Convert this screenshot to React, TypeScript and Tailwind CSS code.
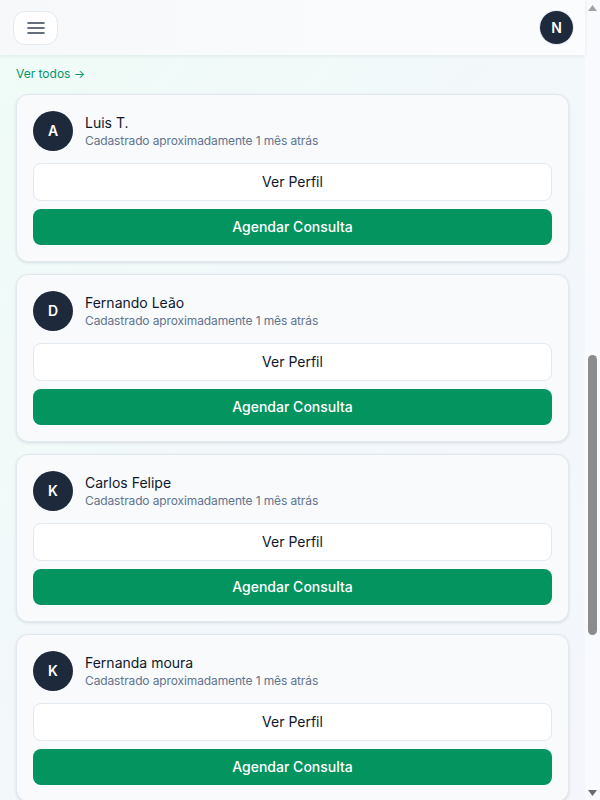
import React from "react";

const patients = [
  { initial: "A", name: "Luis T." },
  { initial: "D", name: "Fernando Leão" },
  { initial: "K", name: "Carlos Felipe" },
  { initial: "K", name: "Fernanda moura" },
];

function PatientCard({ initial, name }: { initial: string; name: string }) {
  return (
    <div className="shrink-0 rounded-xl border border-slate-200 bg-[#f8fafc] p-4 shadow-[0_1px_3px_rgba(15,23,42,0.12)]">
      <div className="flex items-center gap-3">
        <div className="flex h-10 w-10 shrink-0 items-center justify-center rounded-full bg-[#1e293b] text-sm font-semibold text-white">
          {initial}
        </div>
        <div className="flex flex-col">
          <span className="text-sm leading-5 text-slate-900">{name}</span>
          <span className="text-xs leading-4 tracking-[-0.01em] text-slate-500">Cadastrado aproximadamente 1 mês atrás</span>
        </div>
      </div>
      <button className="mt-3 flex h-[38px] w-full items-center justify-center rounded-lg border border-slate-200 bg-white text-sm text-slate-900">
        Ver Perfil
      </button>
      <button className="mt-2 flex h-9 w-full items-center justify-center rounded-lg bg-[#03945f] text-sm font-medium text-white">
        Agendar Consulta
      </button>
    </div>
  );
}

export default function App() {
  return (
    <div className="flex h-screen overflow-hidden bg-gradient-to-br from-[#effcf7] via-[#f3f8fb] to-[#f4f6fc] font-['Inter',sans-serif] text-slate-900">
      <div className="flex min-w-0 flex-1 flex-col">
        <header className="relative z-10 flex h-[55px] shrink-0 items-center justify-between bg-gradient-to-r from-[#f7f8fa] to-[#fbfcfe] px-3 shadow-[0_1px_4px_rgba(15,23,42,0.08)]">
          <button className="ml-[1px] flex h-[34px] w-[45px] items-center justify-center rounded-xl border border-slate-200 bg-white">
            <svg width="18" height="14" viewBox="0 0 18 14" fill="none">
              <path d="M1 2h16M1 7h16M1 12h16" stroke="#334155" strokeWidth="1.6" strokeLinecap="round" />
            </svg>
          </button>
          <div className="flex h-[33px] w-[33px] items-center justify-center rounded-full bg-[#1e293b] text-sm font-semibold text-white ring-1 ring-slate-200">
            N
          </div>
        </header>

        <main className="flex min-h-0 flex-1 flex-col overflow-hidden px-4 pt-[11px]">
          <div className="mb-3 flex items-center">
            <a className="text-xs leading-4 text-[#059669]">Ver todos →</a>
          </div>
          <div className="flex flex-col gap-3">
            {patients.map((p) => (
              <PatientCard key={p.name} {...p} />
            ))}
          </div>
        </main>
      </div>

      <aside className="flex w-[15px] shrink-0 flex-col bg-[#f8fafd]">
        <div className="flex h-[15px] items-center justify-center">
          <svg width="9" height="6" viewBox="0 0 9 6">
            <polygon points="4.5,0 9,6 0,6" fill="#a3a3a3" />
          </svg>
        </div>
        <div className="flex flex-1 flex-col items-center">
          <div className="mt-[340px] h-[280px] w-[9px] rounded-full bg-[#8c8c8c]" />
        </div>
        <div className="flex h-[15px] items-center justify-center">
          <svg width="9" height="6" viewBox="0 0 9 6">
            <polygon points="0,0 9,0 4.5,6" fill="#6b6b6b" />
          </svg>
        </div>
      </aside>
    </div>
  );
}
